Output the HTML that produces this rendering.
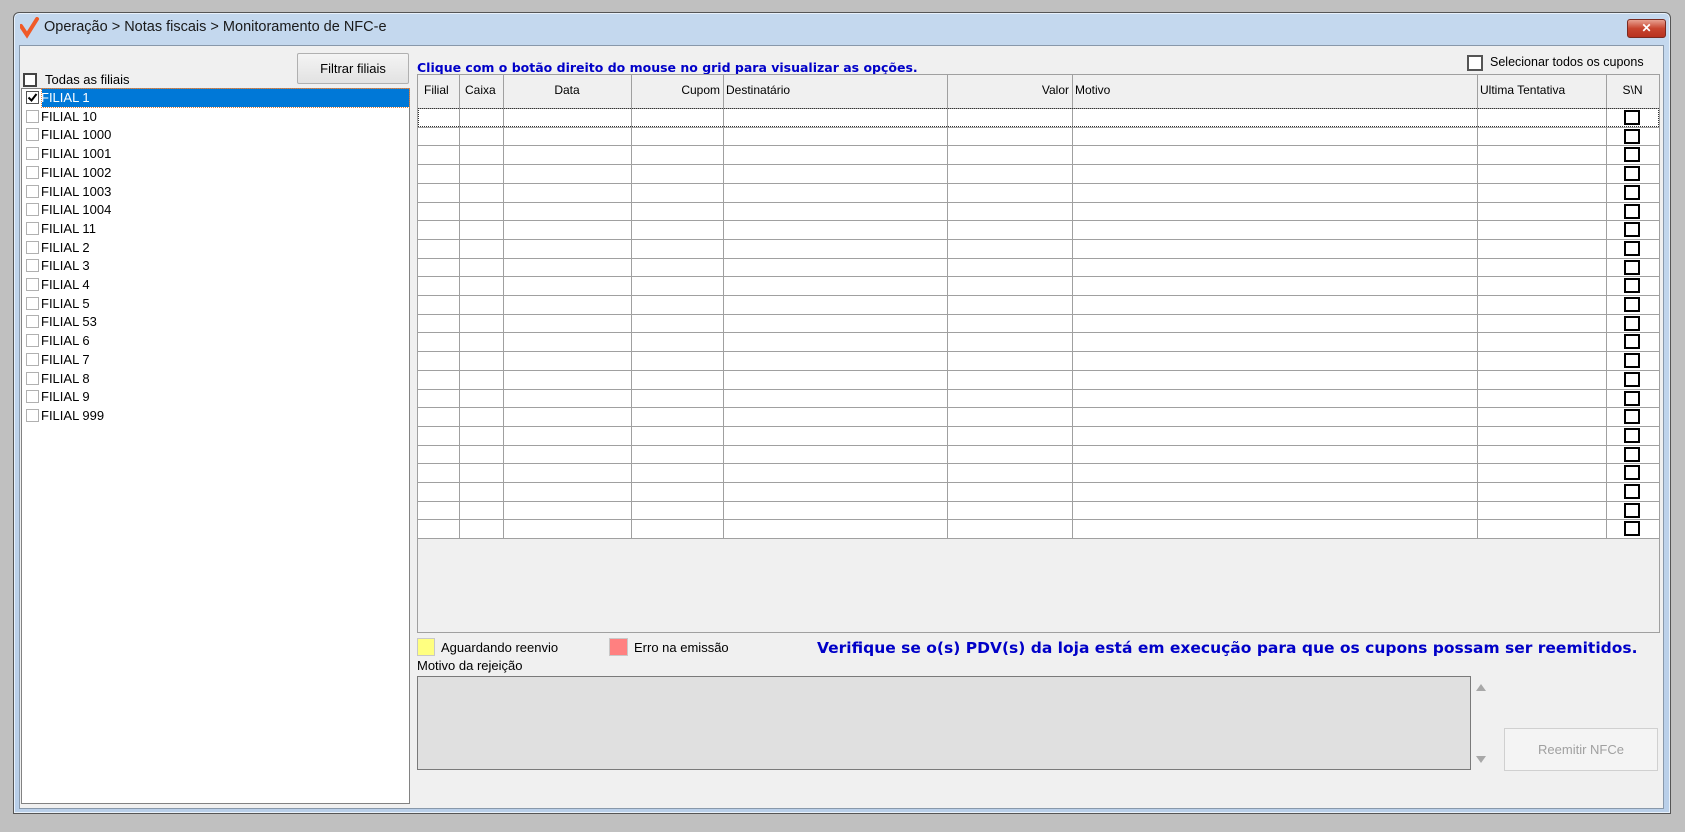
<!DOCTYPE html>
<html><head><meta charset="utf-8">
<style>
*{box-sizing:border-box;margin:0;padding:0}
body{width:1685px;height:832px;background:#c0c0c0;position:relative;overflow:hidden;font-family:"Liberation Sans",Arial,sans-serif;font-size:12px;color:#000}
.a{position:absolute}
.win{left:13px;top:12px;width:1658px;height:802px;background:linear-gradient(#c4d8ee,#b9cfe9);border:1px solid #555;border-radius:6px 6px 0 0;box-shadow:inset 0 0 0 1px #e8f1fb}
.content{left:19px;top:45px;width:1645px;height:764px;background:#f0f0f0;border:1px solid #8898aa}
.cb{position:absolute;width:14px;height:14px;border:1px solid #aaa;background:#fff}
.cbd{border:2px solid #555}
.hd{position:absolute;top:74px;height:34px;line-height:33px;font-size:12px;color:#000;padding:0 3px;white-space:nowrap}
.grow{position:absolute;left:417px;width:1242px;height:1px;background:#a0a0a0}
.vl{position:absolute;width:1px;background:#a0a0a0}
.gcb{position:absolute;left:1624px;width:16px;height:15px;border:2px solid #000;background:#fff}
.li{position:absolute;left:41px;font-size:13px;white-space:nowrap}
</style></head><body>
<div class="a win"></div>
<svg class="a" style="left:20px;top:17px" width="20" height="22" viewBox="0 0 20 22"><path d="M1 9 L7 18 L17 2" stroke="#f05a28" stroke-width="4" fill="none" stroke-linecap="round"/></svg>
<div class="a" style="left:44px;top:19px;font-size:14.5px;color:#1a1a1a">Operação &gt; Notas fiscais &gt; Monitoramento de NFC-e</div>
<div class="a" style="left:1627px;top:19px;width:39px;height:19px;border-radius:3px;background:linear-gradient(#e8a090,#c8452f 50%,#b83220);border:1px solid #7a2a20;color:#fff;font-weight:bold;font-size:12px;text-align:center;line-height:17px">✕</div>
<div class="a content"></div>

<div class="a" style="left:297px;top:53px;width:112px;height:31px;background:linear-gradient(#f4f4f4,#e2e2e2);border:1px solid #b0b0b0;border-radius:2px;text-align:center;line-height:29px;font-size:13px">Filtrar filiais</div>
<div class="cb cbd" style="left:23px;top:73px;border-color:#444"></div>
<div class="a" style="left:45px;top:72px;font-size:13px">Todas as filiais</div>
<div class="a" style="left:21px;top:88px;width:389px;height:716px;background:#fff;border:1px solid #828282"></div>
<div class="a" style="left:42px;top:89px;width:367px;height:18px;background:#0078d7;outline:1px dotted #e08040"></div>
<div id="list"></div>

<div class="a" style="left:417px;top:60px;font-family:'DejaVu Sans',sans-serif;font-weight:bold;font-size:12.5px;color:#0000c8;white-space:nowrap">Clique com o botão direito do mouse no grid para visualizar as opções.</div>
<div class="cb cbd" style="left:1467px;top:55px;width:16px;height:16px;border-color:#555"></div>
<div class="a" style="left:1490px;top:55px;font-size:12.5px">Selecionar todos os cupons</div>
<div class="a" style="left:417px;top:74px;width:1243px;height:559px;background:#f0f0f0;border:1px solid #a0a0a0"></div>
<div class="a" style="left:418px;top:108px;width:1241px;height:430px;background:#fff"></div>
<div class="a" style="left:418px;top:75px;width:1241px;height:33px;background:#f0f0f0"></div>
<div id="grid"></div>
<div class="hd" style="left:421px">Filial</div>
<div class="hd" style="left:462px">Caixa</div>
<div class="hd" style="left:503px;width:128px;text-align:center">Data</div>
<div class="hd" style="left:631px;width:92px;text-align:right">Cupom</div>
<div class="hd" style="left:723px">Destinatário</div>
<div class="hd" style="left:947px;width:125px;text-align:right">Valor</div>
<div class="hd" style="left:1072px">Motivo</div>
<div class="hd" style="left:1477px">Ultima Tentativa</div>
<div class="hd" style="left:1606px;width:53px;text-align:center">S\N</div>
<div class="a" style="left:418px;top:108px;width:1241px;height:19px;border:1px dotted #333"></div>

<div class="a" style="left:417px;top:638px;width:18px;height:18px;background:#ffff80;border:1px solid #c8c8c8"></div>
<div class="a" style="left:441px;top:640px;font-size:13px">Aguardando reenvio</div>
<div class="a" style="left:609px;top:638px;width:19px;height:18px;background:#ff8080;border:1px solid #c8c8c8"></div>
<div class="a" style="left:634px;top:640px;font-size:13px">Erro na emissão</div>
<div class="a" style="left:817px;top:639px;font-family:'DejaVu Sans',sans-serif;font-weight:bold;font-size:15.5px;color:#0000c8;white-space:nowrap">Verifique se o(s) PDV(s) da loja está em execução para que os cupons possam ser reemitidos.</div>
<div class="a" style="left:417px;top:658px;font-size:13px">Motivo da rejeição</div>
<div class="a" style="left:417px;top:676px;width:1054px;height:94px;background:#e0e0e0;border:1px solid #7a7a7a"></div>
<div class="a" style="left:1476px;top:684px;width:0;height:0;border-left:5px solid transparent;border-right:5px solid transparent;border-bottom:7px solid #a8a8a8"></div>
<div class="a" style="left:1476px;top:756px;width:0;height:0;border-left:5px solid transparent;border-right:5px solid transparent;border-top:7px solid #a8a8a8"></div>
<div class="a" style="left:1504px;top:728px;width:154px;height:43px;background:#f4f4f4;border:1px solid #d0d0d0;text-align:center;line-height:41px;font-size:13px;color:#a0a0a0">Reemitir NFCe</div>

<script>
var names=["FILIAL 1","FILIAL 10","FILIAL 1000","FILIAL 1001","FILIAL 1002","FILIAL 1003","FILIAL 1004","FILIAL 11","FILIAL 2","FILIAL 3","FILIAL 4","FILIAL 5","FILIAL 53","FILIAL 6","FILIAL 7","FILIAL 8","FILIAL 9","FILIAL 999"];
var h="";
names.forEach(function(n,i){var y=89+i*18.7;
h+='<div class="cb" style="left:26px;top:'+(y+2)+'px;width:13px;height:13px;border-color:#b0b0b0;'+(i==0?'border-color:#555;':'')+'">'+(i==0?'<svg width="11" height="11" style="position:absolute;left:0;top:0"><path d="M1.5 5.5 L4.5 8.5 L9.5 2" stroke="#000" stroke-width="2" fill="none"/></svg>':'')+'</div>';
h+='<div class="li" style="top:'+(y+1)+'px;'+(i==0?'color:#fff;':'')+'">'+n+'</div>';});
document.getElementById("list").innerHTML=h;
var g="";
[459,503,631,723,947,1072,1477,1606].forEach(function(x){g+='<div class="vl" style="left:'+x+'px;top:75px;height:'+(538-75)+'px"></div>';});
g+='<div class="grow" style="top:108px;background:#a0a0a0"></div>';
for(var i=1;i<=23;i++){var y=108+i*18.7;g+='<div class="grow" style="top:'+y.toFixed(1)+'px"></div>';}
for(var i=0;i<23;i++){var y=108+i*18.7+2;g+='<div class="gcb" style="top:'+y.toFixed(1)+'px"></div>';}
document.getElementById("grid").innerHTML=g;
</script>
</body></html>
